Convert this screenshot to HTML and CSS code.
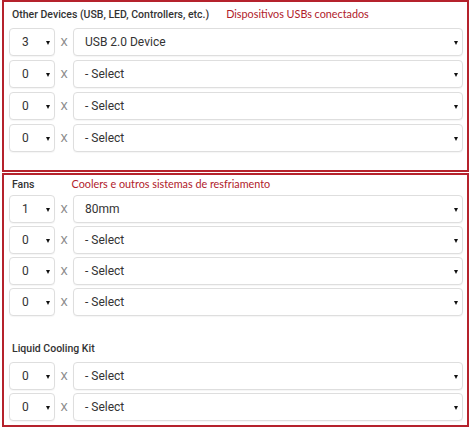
FILE: index.html
```html
<!DOCTYPE html>
<html lang="en">
<head>
  <meta charset="UTF-8">
  <meta name="viewport" content="width=device-width, initial-scale=1">
  <title>Other Devices and Fans</title>
  <link rel="stylesheet" href="styles.css">
</head>

<body>

<!-- Other Devices -->
<div class="panel panel-devices">
  <div class="panel-head">
    <h3>Other Devices (USB, LED, Controllers, etc.)</h3>
    <span class="note">Dispositivos USBs conectados</span>
  </div>
  <div class="rows">
    <div class="row">
      <div class="select qty">3</div><span class="times">X</span><div class="select item">USB 2.0 Device</div>
    </div>
    <div class="row">
      <div class="select qty">0</div><span class="times">X</span><div class="select item">- Select</div>
    </div>
    <div class="row">
      <div class="select qty">0</div><span class="times">X</span><div class="select item">- Select</div>
    </div>
    <div class="row">
      <div class="select qty">0</div><span class="times">X</span><div class="select item">- Select</div>
    </div>
  </div>
</div>

<!-- Fans + Liquid Cooling -->
<div class="panel panel-fans">
  <div class="panel-head">
    <h3>Fans</h3>
    <span class="note">Coolers e outros sistemas de resfriamento</span>
  </div>
  <div class="rows">
    <div class="row">
      <div class="select qty">1</div><span class="times">X</span><div class="select item">80mm</div>
    </div>
    <div class="row">
      <div class="select qty">0</div><span class="times">X</span><div class="select item">- Select</div>
    </div>
    <div class="row">
      <div class="select qty">0</div><span class="times">X</span><div class="select item">- Select</div>
    </div>
    <div class="row">
      <div class="select qty">0</div><span class="times">X</span><div class="select item">- Select</div>
    </div>
  </div>

  <div class="panel-head sub">
    <h3>Liquid Cooling Kit</h3>
  </div>
  <div class="rows">
    <div class="row">
      <div class="select qty">0</div><span class="times">X</span><div class="select item">- Select</div>
    </div>
    <div class="row">
      <div class="select qty">0</div><span class="times">X</span><div class="select item">- Select</div>
    </div>
  </div>
</div>

</body>
</html>
```

FILE: styles.css
```css
* {
  box-sizing: border-box;
  padding: 0;
  margin: 0;
}

body {
  font-family: Roboto, Arial, sans-serif;
  background: #fff;
  color: #333;
  padding: 0 5px 0 2px;
}

.panel {
  border: 2px solid #b5222c;
  padding: 5px 4px 0 5px;
}

.panel-devices {
  height: 172px;
}

.panel-fans {
  margin-top: 1px;
  height: 254px;
  padding-top: 2px;
}

.panel-head {
  display: flex;
  align-items: baseline;
  height: 21px;
  padding-left: 3px;
  white-space: nowrap;
}

.panel-fans .panel-head {
  height: 18px;
}

.panel-fans .panel-head.sub {
  margin-top: 18px;
  height: 28px;
  align-items: center;
}

h3 {
  flex-shrink: 0;
  font-size: 10.5px;
  font-weight: 500;
  color: #333;
}

.note {
  font-family: Lato, sans-serif;
  font-size: 10.8px;
  color: #b0202a;
}

.panel-devices .note {
  margin-left: 17px;
}

.panel-fans .note {
  margin-left: 37px;
}

/* Rows of selects */
.rows {
  display: flex;
  flex-direction: column;
  gap: 4px;
}

.panel-fans .rows {
  gap: 3px;
}

.row {
  display: flex;
  align-items: center;
}

.select {
  flex-shrink: 0;
  position: relative;
  height: 28px;
  line-height: 26px;
  border: 1px solid #dedede;
  border-radius: 4px;
  background: #fff;
  font-size: 12px;
  color: #333;
  box-shadow: 0 1px 1px rgba(0,0,0,0.04);
}

.select::after {
  content: "";
  position: absolute;
  right: 4px;
  top: 12px;
  border-left: 2.5px solid transparent;
  border-right: 2.5px solid transparent;
  border-top: 4px solid #111;
}

.qty {
  width: 46px;
  padding-left: 12px;
}

.times {
  flex-shrink: 0;
  width: 18px;
  text-align: center;
  font-size: 11.5px;
  color: #8a8a8a;
}

.item {
  flex: 1;
  padding-left: 11px;
}
```
